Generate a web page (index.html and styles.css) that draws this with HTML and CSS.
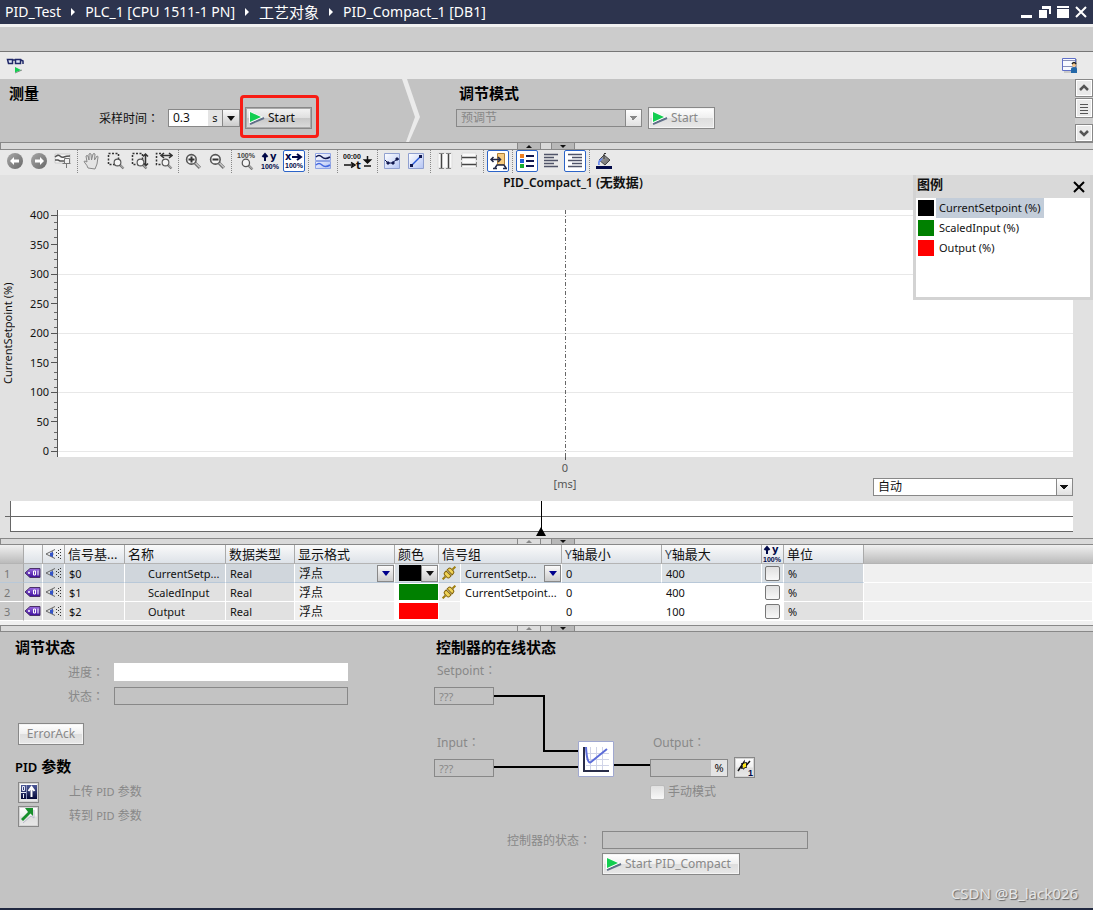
FILE: index.html
```html
<!DOCTYPE html>
<html lang="zh-CN">
<head>
<meta charset="utf-8">
<title>PID_Compact_1 [DB1]</title>
<link rel="stylesheet" href="styles.css">
</head>
<body>
<svg class="defs" aria-hidden="true">
  <defs>
    <linearGradient id="gGrey" x1="0" y1="0" x2="1" y2="1"><stop offset="0" stop-color="#a8a8a8"/><stop offset="1" stop-color="#686868"/></linearGradient>
    <linearGradient id="gBlue" x1="0" y1="0" x2="1" y2="1"><stop offset="0" stop-color="#ffffff"/><stop offset="1" stop-color="#b4c4f4"/></linearGradient>
    <linearGradient id="gTag" x1="0" y1="0" x2="0" y2="1"><stop offset="0" stop-color="#9a6ae0"/><stop offset="1" stop-color="#3c0c9c"/></linearGradient>
    <linearGradient id="gNavy" x1="0" y1="0" x2="0" y2="1"><stop offset="0" stop-color="#4c5898"/><stop offset="1" stop-color="#040838"/></linearGradient>
    <symbol id="play" viewBox="0 0 16 14"><path d="M1 13L15 7" stroke="#5f6f88" stroke-width="2"/><path d="M0 0L14 6L0 12.500Z" fill="#fff"/><path d="M1 1L12 6L1 11Z" fill="#12ce50"/></symbol>
    <symbol id="mag" viewBox="0 0 16 16"><path d="M9.500 9.500l4.500 4.500" stroke="#777" stroke-width="3"/><path d="M9.500 9l4.500 4.500" stroke="#d8d8d8" stroke-width="1"/><circle cx="6" cy="6" r="4.500" fill="#f4f4f4" stroke="#555" stroke-width="1.500"/></symbol>
    <symbol id="tag" viewBox="0 0 16 12"><path d="M0 6L5 1.500H15V10.500H5Z" fill="url(#gTag)" stroke="#4a3068"/><circle cx="4" cy="6" r="1" fill="#fff"/><path d="M8.500 4h2v4h-2zM13 3.500v5" fill="none" stroke="#fff"/></symbol>
    <symbol id="eye" viewBox="0 0 16 12"><path d="M10 1.500L1 6L10 10.500M7 3q2 3 0 6" fill="none" stroke="#666"/><path d="M5 5l3-1v5l-3-1z" fill="#3454c8"/><path d="M11 4h1v1h-1zM11 7h1v1h-1zM13 2h1v1h-1zM13 5h1v1h-1zM13 9h1v1h-1zM15 1h1v1h-1zM15 4h1v1h-1zM15 7h1v1h-1zM15 10h1v1h-1z" fill="#333"/></symbol>
    <symbol id="link" viewBox="0 0 14 14"><g transform="rotate(-45 7 7)"><path d="M-2 7h4M12 7h4" stroke="#a08010" stroke-width="2"/><path d="M2.500 5.500q0-2 2-2h2v7h-2q-2 0-2-2zM8 3.500h1.500q2 0 2 2v3q0 2-2 2H8z" fill="#f0d458" stroke="#806008"/></g></symbol>
  </defs>
</svg>

<header class="titlebar">
  <nav class="crumbs">
    <span>PID_Test</span><i class="arrow"></i><span>PLC_1 [CPU 1511-1 PN]</span><i class="arrow"></i><span class="cjk">工艺对象</span><i class="arrow"></i><span>PID_Compact_1 [DB1]</span>
  </nav>
  <div class="winbtns">
    <button aria-label="最小化"><svg width="12" height="12"><path d="M0 9h11v3H0z" fill="#fff"/></svg></button>
    <button aria-label="还原"><svg width="12" height="12"><path d="M3 0h9v8h-2V3H3z" fill="#fff"/><path d="M0 4h8v8H0z" fill="#fff"/></svg></button>
    <button aria-label="最大化"><svg width="12" height="12"><path d="M0 0h12v2H0zM0 3h12v9H0z" fill="#fff"/></svg></button>
    <button aria-label="关闭"><svg width="12" height="12"><path d="M1 1l10 10M11 1L1 11" stroke="#fff" stroke-width="2"/></svg></button>
  </div>
</header>
<div class="tabstrip"></div>
<div class="topbar">
  <button class="plain" aria-label="监视"><svg width="18" height="17"><path d="M1.500 2.500h5v4h-4zM9.500 2.500h5v4h-5zM6 3h4M15 3l2 1v3" fill="#dce4f4" stroke="#202868" stroke-width="1.500"/><path d="M9 16l7-3" stroke="#888"/><path d="M9 10l6 3l-6 2.500z" fill="#12ce50"/></svg></button>
  <button class="plain" aria-label="视图"><svg width="17" height="17"><path d="M1.500 1.500h13v12h-13z" fill="#f8faff" stroke="#6070c8"/><path d="M2 3.500h12M2 9.500h10" stroke="#8890b8"/><path d="M15.500 2v13H3" fill="none" stroke="#aaa"/><path d="M10 16v-4q0-2 3-2t3 2v4z" fill="#2468a8"/><circle cx="13" cy="8" r="2" fill="#f4c488"/><path d="M11 7q2-3 4 0" fill="none" stroke="#222" stroke-width="1.500"/></svg></button>
</div>

<section class="measure">
  <div class="measure-left">
    <h2>测量</h2>
    <div class="row sample">
      <label for="rate">采样时间<span class="colon" lang="zh-TW">：</span></label>
      <div class="combo rate"><input id="rate" value="0.3"><span class="unit">s</span><button class="drop" aria-label="展开"><i class="tri"></i></button></div>
      <div class="marked"><button class="btn start"><svg width="16" height="14"><use href="#play"/></svg>Start</button></div>
    </div>
  </div>
  <svg class="chevron" width="20" height="63"><path d="M0 0h5l13 38l-11 25H4l9-25z" fill="#ebebeb"/></svg>
  <div class="measure-right">
    <h2>调节模式</h2>
    <div class="row">
      <select class="mode" aria-label="调节模式" disabled><option>预调节</option></select>
      <button class="btn start" disabled><svg width="16" height="14"><use href="#play"/></svg>Start</button>
    </div>
  </div>
  <div class="scroll">
    <button aria-label="向上"><svg width="16" height="16"><path d="M4 10l4-4l4 4" fill="none" stroke="#555" stroke-width="2.500"/></svg></button>
    <button class="thumb" aria-label="滚动条"><svg width="16" height="16"><path d="M4 4.500h8M4 7.500h8M4 10.500h8M4 13.500h8" stroke="#555"/></svg></button>
    <button class="down" aria-label="向下"><svg width="16" height="16"><path d="M4 6l4 4l4-4" fill="none" stroke="#555" stroke-width="2.500"/></svg></button>
  </div>
</section>
<div class="splitter"><span><i class="tri up"></i></span><span><i class="tri"></i></span></div>

<div class="tools">
  <button aria-label="后退"><svg width="18" height="18"><circle cx="9" cy="9" r="8" fill="url(#gGrey)"/><path d="M4 9l4-4v2.500h5v3H8V13z" fill="#fff"/></svg></button>
  <button aria-label="前进"><svg width="18" height="18"><circle cx="9" cy="9" r="8" fill="url(#gGrey)"/><path d="M14 9l-4-4v2.500H5v3h5V13z" fill="#fff"/></svg></button>
  <button aria-label="曲线"><svg width="18" height="18"><path d="M1 2h15v9H1z" fill="#f6f6f6" stroke="#ccc"/><path d="M1 5q3-3 5-1t4 1t6-1M1 8h3l2 1h4" fill="none" stroke="#555" stroke-width="1.500"/><path d="M10.500 6.500h5v5h-5zM8.500 11.500h8M12.500 12v4" fill="#eee" stroke="#777"/></svg></button>
  <i class="sep"></i>
  <button aria-label="平移"><svg width="18" height="18"><path d="M5 16q-1-3-3-5t0-2l2 1L3 4q1-1 2 0l1 4V2q1-1 2 0l.5 6L10 2q1-1 2 0l-.5 6L14 4q1 0 1 1l-1 7l-2 5z" fill="#e4e4e4" stroke="#888"/></svg></button>
  <button aria-label="区域缩放"><svg width="18" height="18"><path d="M1.500 1.500h10v11h-10z" fill="none" stroke="#333" stroke-width="1.500" stroke-dasharray="2 1.500"/><use href="#mag" x="6" y="6" width="12" height="12"/></svg></button>
  <button aria-label="垂直缩放"><svg width="18" height="18"><path d="M1.500 1.500h10v11h-10z" fill="none" stroke="#333" stroke-width="1.500" stroke-dasharray="2 1.500"/><use href="#mag" x="5" y="6" width="12" height="12"/><path d="M14.500 2v11M12 4.500L14.500 2L17 4.500M13 11.500l2 2l2-2" fill="none" stroke="#333" stroke-width="1.500"/></svg></button>
  <button aria-label="水平缩放"><svg width="18" height="18"><path d="M6 1.500H1.500v11H7" fill="none" stroke="#333" stroke-width="1.500" stroke-dasharray="2 1.500"/><use href="#mag" x="6" y="6" width="12" height="12"/><path d="M6 3.500h11M9 1L6 3.500L9 6M14 1l3 2.500L14 6" fill="none" stroke="#333" stroke-width="1.500"/></svg></button>
  <i class="sep"></i>
  <button aria-label="放大"><svg width="18" height="18"><use href="#mag" x="1" y="1" width="17" height="17"/><path d="M4.500 7.500h6M7.500 4.500v6" stroke="#333" stroke-width="2"/></svg></button>
  <button aria-label="缩小"><svg width="18" height="18"><use href="#mag" x="1" y="1" width="17" height="17"/><path d="M4.500 7.500h6" stroke="#333" stroke-width="2"/></svg></button>
  <i class="sep"></i>
  <button aria-label="100%"><svg width="20" height="18"><text x="1" y="6" class="pct grey">100%</text><use href="#mag" x="5" y="6" width="13" height="13"/></svg></button>
  <button aria-label="Y 100%"><svg width="20" height="18"><path d="M5 9V3M2.500 5L5 2L7.500 5" fill="none" stroke="#000848" stroke-width="2"/><text x="10" y="8" class="axis">y</text><text x="1" y="17" class="pct">100%</text></svg></button>
  <button class="on" aria-label="X 100%"><svg width="20" height="20"><text x="1" y="9" class="axis">x</text><path d="M8 6h8M13 3l4 3l-4 3" fill="none" stroke="#000848" stroke-width="2"/><text x="1" y="17" class="pct">100%</text></svg></button>
  <i class="sep"></i>
  <button aria-label="泳道"><svg width="18" height="18"><path d="M1.500 1.500h15v7h-15zM1.500 9.500h15v7h-15z" fill="url(#gBlue)" stroke="#90a4e4"/><path d="M2 5q3-3 6 0t8 0" fill="none" stroke="#101850" stroke-width="1.500"/><path d="M2 13q3-3 6 0t8 0" fill="none" stroke="#4468e0" stroke-width="1.500"/></svg></button>
  <i class="sep"></i>
  <button class="wide" aria-label="时间单位"><svg width="30" height="18"><text x="0" y="7" class="pct black">00:00</text><path d="M1 13h9M8 10.500l4 2.500l-4 2.500" fill="none" stroke="#111" stroke-width="1.500"/><text x="13" y="17" class="axis black">t</text><path d="M24.500 4v5M21.500 8h6l-3 3zM21 14h7" fill="#111" stroke="#111" stroke-width="1.500"/></svg></button>
  <i class="sep"></i>
  <button aria-label="插值"><svg width="18" height="18"><path d="M1.500 1.500h15v15h-15z" fill="url(#gBlue)" stroke="#90a0d0"/><path d="M2 8l3 3h4l4-3l3-1" fill="none" stroke="#101850"/><path d="M4 10h2v2H4zM9 10h2v2H9zM13 6h2v2h-2z" fill="#101850" stroke="#101850"/></svg></button>
  <button aria-label="直线"><svg width="18" height="18"><path d="M1.500 1.500h15v15h-15z" fill="url(#gBlue)" stroke="#90a0d0"/><path d="M4 14L14 4" stroke="#2858d8" stroke-width="1.500"/><path d="M3 12h3v3H3zM12 3h3v3h-3z" fill="#101850"/></svg></button>
  <i class="sep"></i>
  <button aria-label="垂直标尺"><svg width="18" height="18"><path d="M2 1h14v15H2z" fill="#fafafa" stroke="#ddd"/><path d="M5.500 2v14M12.500 2v14" stroke="#444" stroke-width="1.500"/><path d="M3 1.500h5M3 16.500h5M10 1.500h5M10 16.500h5" stroke="#888"/></svg></button>
  <button aria-label="水平标尺"><svg width="18" height="18"><path d="M2 1h14v15H2z" fill="#fafafa" stroke="#ddd"/><path d="M2 5.500h14M2 12.500h14" stroke="#444" stroke-width="1.500"/><path d="M1.500 3v5M16.500 3v5M1.500 10v5M16.500 10v5" stroke="#888"/></svg></button>
  <i class="sep"></i>
  <button class="on" aria-label="图表设置"><svg width="18" height="18"><path d="M8.500 1.500h7v11h-7z" fill="#f8cc80" stroke="#b08038"/><path d="M6 16l2-3h7l2 3M4 16.500h4M14 16.500h4" stroke="#202848" stroke-width="1.500" fill="none"/><path d="M2 7.500h9M4.500 5L2 7.500l2.500 2.500M9 5l2.500 2.500L9 10" fill="none" stroke="#202848" stroke-width="1.500"/></svg></button>
  <i class="sep"></i>
  <button class="on" aria-label="图例"><svg width="18" height="18"><path d="M2 2h4v4H2z" fill="#f08020"/><path d="M2 7h4v4H2z" fill="#2060d8"/><path d="M2 12h4v4H2z" fill="#18b030"/><path d="M8 4h8M8 9h8M8 14h8" stroke="#101850" stroke-width="2"/></svg></button>
  <button aria-label="左对齐"><svg width="18" height="18"><path d="M2 2.500h14M2 5.500h10M2 8.500h14M2 11.500h10M2 14.500h14" stroke="#505468" stroke-width="1.500"/></svg></button>
  <button class="on" aria-label="右对齐"><svg width="18" height="18"><path d="M2 2.500h14M6 5.500h10M2 8.500h14M6 11.500h10M2 14.500h14" stroke="#505468" stroke-width="1.500"/></svg></button>
  <i class="sep"></i>
  <button aria-label="背景颜色"><svg width="18" height="18"><path d="M1 14h16v3H1z" fill="#000848"/><path d="M9 3l6 5l-5 5l-6-5z" fill="url(#gGrey)" stroke="#444"/><path d="M9 7V2q1-2 2 0" fill="none" stroke="#333"/><path d="M3 13q-1-6 5-7l-2 3q-2 1-1 4z" fill="#6c8cf0"/></svg></button>
</div>

<section class="chart">
  <h3>PID_Compact_1 (<span class="cjk">无数据</span>)</h3>
  <div class="plotrow">
    <div class="ytitle">CurrentSetpoint (%)</div>
    <div class="ylabels"><span>400</span><span>350</span><span>300</span><span>250</span><span>200</span><span>150</span><span>100</span><span>50</span><span>0</span></div>
    <div class="ticks"></div>
    <svg class="plot" width="100%" height="247">
      <line x1="0" x2="100%" y1="5.5" y2="5.5"/><line x1="0" x2="100%" y1="64.5" y2="64.5"/><line x1="0" x2="100%" y1="123.5" y2="123.5"/><line x1="0" x2="100%" y1="182.5" y2="182.5"/><line x1="0" x2="100%" y1="241.5" y2="241.5"/>
      <line class="cursor" x1="50%" x2="50%" y1="0" y2="247"/>
    </svg>
  </div>
  <div class="xaxis"><i></i><span>0</span><span>[ms]</span></div>
  <div class="autorow"><div class="combo auto"><select aria-label="模式"><option>自动</option></select></div></div>
  <div class="timeline"><div class="track"></div><svg class="handle" width="10" height="35"><path d="M5.500 0v35" stroke="#000"/><path d="M5 26l5 9H0z"/></svg></div>
  <aside class="legend">
    <header><h3 class="cjk">图例</h3><button aria-label="关闭"><svg width="12" height="12"><path d="M1 1l10 10M11 1L1 11" stroke="#000" stroke-width="2"/></svg></button></header>
    <ul>
      <li><i class="black"></i><span class="sel">CurrentSetpoint (%)</span></li>
      <li><i class="green"></i><span>ScaledInput (%)</span></li>
      <li><i class="red"></i><span>Output (%)</span></li>
    </ul>
  </aside>
</section>
<div class="splitter"><span class="dim"><i class="tri up"></i></span><span><i class="tri"></i></span></div>

<table class="signals">
  <colgroup><col class="c24"><col class="c19"><col class="c22"><col class="c60"><col class="c101"><col class="c69"><col class="c100"><col class="c44"><col class="c22"><col class="c101"><col class="c100"><col class="c100"><col class="c22"><col class="c80"><col></colgroup>
  <thead><tr><th></th><th></th><th><svg width="16" height="12"><use href="#eye"/></svg></th><th>信号基...</th><th>名称</th><th>数据类型</th><th>显示格式</th><th>颜色</th><th colspan="2">信号组</th><th><span class="navy">Y</span>轴最小</th><th><span class="navy">Y</span>轴最大</th><th class="ic"><svg width="20" height="18"><path d="M5 9V3M2.500 5L5 2L7.500 5" fill="none" stroke="#000848" stroke-width="2"/><text x="10" y="8" class="axis">y</text><text x="1" y="17" class="pct">100%</text></svg></th><th>单位</th><th></th></tr></thead>
  <tbody>
    <tr class="sel"><td class="num">1</td><td class="ro"><svg width="16" height="12"><use href="#tag"/></svg></td><td class="ro"><svg width="16" height="12"><use href="#eye"/></svg></td><td class="ro">$0</td><td class="ro name">CurrentSetp...</td><td class="ro">Real</td><td class="semi"><div class="cell cjk12">浮点<button class="drop blue" aria-label="格式"><i class="tri"></i></button></div></td><td class="color"><div class="cell"><i class="sw black"></i><button class="drop" aria-label="颜色"><i class="tri"></i></button></div></td><td class="semi ic"><svg width="14" height="14"><use href="#link"/></svg></td><td><div class="cell">CurrentSetp...<button class="drop blue" aria-label="信号组"><i class="tri"></i></button></div></td><td>0</td><td>400</td><td class="ic"><input type="checkbox" aria-label="Y 100%"></td><td class="ro">%</td><td class="none"></td></tr>
    <tr><td class="num">2</td><td class="ro"><svg width="16" height="12"><use href="#tag"/></svg></td><td class="ro"><svg width="16" height="12"><use href="#eye"/></svg></td><td class="ro">$1</td><td class="ro name">ScaledInput</td><td class="ro">Real</td><td class="semi cjk12">浮点</td><td class="color"><div class="cell"><i class="sw green"></i></div></td><td class="semi ic"><svg width="14" height="14"><use href="#link"/></svg></td><td>CurrentSetpoint...</td><td>0</td><td>400</td><td class="ic"><input type="checkbox" aria-label="Y 100%"></td><td class="ro">%</td><td class="none"></td></tr>
    <tr><td class="num">3</td><td class="ro"><svg width="16" height="12"><use href="#tag"/></svg></td><td class="ro"><svg width="16" height="12"><use href="#eye"/></svg></td><td class="ro">$2</td><td class="ro name">Output</td><td class="ro">Real</td><td class="semi cjk12">浮点</td><td class="color"><div class="cell"><i class="sw red"></i></div></td><td class="semi ic"></td><td></td><td>0</td><td>100</td><td class="ic"><input type="checkbox" aria-label="Y 100%"></td><td class="ro">%</td><td class="none"></td></tr>
  </tbody>
</table>
<div class="tablefoot"></div>
<div class="splitter"><span class="dim"><i class="tri up"></i></span><span><i class="tri"></i></span></div>

<main class="status">
  <section class="tuning">
    <h2>调节状态</h2>
    <div class="field"><label for="prog">进度<span class="colon" lang="zh-TW">：</span></label><input id="prog" class="white" disabled></div>
    <div class="field"><label for="stat">状态<span class="colon" lang="zh-TW">：</span></label><input id="stat" disabled></div>
    <button class="btn ack" disabled>ErrorAck</button>
    <h2><span class="latin">PID</span> 参数</h2>
    <div class="param"><button class="btn icon" aria-label="上传 PID 参数"><svg width="18" height="18"><path d="M1 2h16v14H1z" fill="url(#gNavy)"/><path d="M2.500 3.500h2v4h-2zM1 9.500h5M3.500 11v4" fill="none" stroke="#e8ecf8"/><path d="M6.500 2v14" stroke="#8890b8"/><path d="M11.500 14V5M8.500 8l3-4l3 4" fill="none" stroke="#fff" stroke-width="2"/></svg></button><span>上传 <span class="latin">PID</span> 参数</span></div>
    <div class="param"><button class="btn icon" aria-label="转到 PID 参数"><svg width="18" height="18"><path d="M14 3v8l-3-2l-8 7" stroke="#bbc" fill="none"/><path d="M5 1h8v8l-2.500-2.500L3 14l-2-2l7-7z" fill="#18902c"/></svg></button><span>转到 <span class="latin">PID</span> 参数</span></div>
  </section>
  <section class="online">
    <h2>控制器的在线状态</h2>
    <div class="diagram">
      <svg class="wires" width="260" height="110"><path d="M60 33h50v55h36M60 104h86M178 102h38" fill="none" stroke="#000" stroke-width="2"/></svg>
      <label class="n-sp-l" for="sp">Setpoint<span class="colon" lang="zh-TW">：</span></label><input class="n-sp" id="sp" value="???" disabled>
      <label class="n-in-l" for="inp">Input<span class="colon" lang="zh-TW">：</span></label><input class="n-in" id="inp" value="???" disabled>
      <svg class="n-pid" width="36" height="36"><path d="M.5.500h35v35H.5z" fill="#fff" stroke="#a0a8d0"/><path d="M12.500 6v23M18.500 6v23M24.500 6v23M8 12.500h23M8 18.500h23M8 24.500h23" stroke="#d0d4e8"/><path d="M6 6v24h25" fill="none" stroke="#282c48" stroke-width="2"/><path d="M8 6q1 18 5 15L29 8" fill="none" stroke="#5c6cd8" stroke-width="2"/></svg>
      <label class="n-out-l" for="out">Output<span class="colon" lang="zh-TW">：</span></label>
      <div class="n-out"><input id="out" disabled><span class="unit">%</span></div>
      <button class="btn icon n-bolt" aria-label="手动"><svg width="18" height="18"><path d="M2 12L8 3V9L14 2M6 10V4M10 9V3" fill="none" stroke="#111" stroke-width="1.500"/><path d="M7 5l3-1v4l-3 1z" fill="#ffe818"/><text x="12" y="17" class="pct one">1</text></svg></button>
      <label class="n-man"><input type="checkbox" disabled>手动模式</label>
    </div>
    <div class="field ctl"><label for="cs">控制器的状态<span class="colon" lang="zh-TW">：</span></label><input id="cs" disabled></div>
    <button class="btn start go" disabled><svg width="16" height="14"><use href="#play"/></svg>Start PID_Compact</button>
  </section>
  <div class="mark">CSDN @B_lack026</div>
</main>
</body>
</html>
```
FILE: styles.css
```css
* { box-sizing: border-box; }
body {
  margin: 0;
  min-height: 100vh;
  display: flex;
  flex-direction: column;
  background: #c3c3c3;
  color: #111;
  font: 11px/16px "Noto Sans", "Noto Sans CJK SC", sans-serif;
}
h2, h3, ul { margin: 0; padding: 0; }
h2 { font-size: 15px; line-height: 20px; font-weight: 700; color: #000; }
h2 .latin { font-size: 13px; font-weight: 600; }
i { font-style: normal; }
svg { display: block; flex: none; }
.defs { position: absolute; width: 0; height: 0; }
button, input, select { font: inherit; color: inherit; margin: 0; padding: 0; border-radius: 0; }
button { border: 0; background: none; display: flex; align-items: center; justify-content: center; }
label { font-size: 12px; line-height: 18px; white-space: nowrap; }
.colon { font-family: "Noto Sans CJK TC", sans-serif; }
.tri { border: 4px solid transparent; border-top: 5px solid currentColor; border-bottom: 0; }
.tri.up { border-bottom: 4px solid currentColor; border-top: 0; }
.black { background: #000; }
.green { background: #008000; }
.red { background: #f00; }
.pct { font: 700 7px "Liberation Sans", sans-serif; fill: #000848; }
.pct.grey { fill: #444; }
.pct.one { font-size: 9px; }
.black.pct, .black.axis { fill: #111; }
.axis { font: 700 10px "DejaVu Sans", sans-serif; fill: #000848; }

.titlebar { display: flex; justify-content: space-between; align-items: center; height: 24px; padding: 0 6px 0 5px; background: #2d344e; color: #fff; }
.crumbs { display: flex; align-items: center; font-size: 14px; }
.crumbs .cjk { font-size: 15px; }
.arrow { margin: 0 10px; border: 4px solid transparent; border-left-color: #fff; border-right: 0; }
.winbtns { display: flex; gap: 6px; }
.tabstrip { height: 25px; margin-top: 3px; background: #ccc; border-bottom: 1px solid #777; box-shadow: 0 -3px #f0f0f0; }
.topbar { display: flex; justify-content: space-between; height: 27px; padding: 5px 15px 0 6px; background: #eaeaea; }
.topbar button { height: 17px; }

.measure { display: flex; height: 64px; border-bottom: 1px solid #888; background: #c3c3c3; }
.measure-left { width: 402px; padding: 4px 0 0 9px; }
.measure-right { flex: 1; padding: 4px 0 0 34px; }
.measure-right h2 { padding-left: 3px; }
.row { display: flex; align-items: center; height: 22px; margin-top: 4px; }
.sample { padding-left: 90px; }
.sample label { width: 69px; }
.combo { display: flex; border: 1px solid #888; background: #fff; height: 18px; }
.rate { width: 72px; margin-right: 5px; }
.rate input { flex: 1; min-width: 0; border: 0; padding-left: 4px; font-size: 12px; }
.unit { width: 14px; text-align: center; background: #e4e4e4; }
.drop { width: 17px; border: 1px solid #888; border-width: 0 0 0 1px; background: linear-gradient(#fafafa, #ccc); }
.drop.blue { color: #00008c; }
.btn { height: 22px; border: 1px solid #888; background: linear-gradient(#fff, #f0f0f0 48%, #dedede 52%, #e8e8e8); box-shadow: inset 0 0 0 1px #d4d4d4; }
.btn:disabled { color: #888; box-shadow: inset 0 0 0 1px #f4f4f4; }
.start { width: 67px; justify-content: flex-start; padding-left: 3px; gap: 3px; font-size: 12px; }
.marked { position: relative; }
.marked .btn { background: linear-gradient(#f4f4f4, #e0e0e0 48%, #c8c8c8 52%, #dcdcdc); box-shadow: inset 0 0 0 1px #aaa; }
.marked::after { content: ""; position: absolute; inset: -12px -7px -9px -5px; border: 3px solid #f81c14; border-radius: 4px; }
.mode { width: 186px; height: 18px; margin-right: 6px; padding-left: 4px; border: 1px solid #888; background: #c3c3c3; color: #888; font-size: 12px; opacity: 1; }
select { appearance: none; }
.mode, .auto select {
  background-image: conic-gradient(from 315deg at 50% 100%, currentColor 90deg, transparent 0), linear-gradient(#888, #888), linear-gradient(#fff, #ddd);
  background-size: 8px 4px, 1px 18px, 15px 18px;
  background-position: right 4px center, right 15px top, right top;
  background-repeat: no-repeat;
}
.scroll { display: flex; flex-direction: column; gap: 1px; width: 18px; background: #cfcfcf; }
.scroll button { height: 18px; border: 1px solid #888; background: #eaeaea; box-shadow: inset 0 0 0 1px #fff; }
.scroll .thumb { height: 20px; }
.scroll .down { margin-top: auto; }

.splitter { display: flex; justify-content: center; gap: 10px; height: 7px; padding-right: 2px; background: #d9d9d9; border: 1px solid #888; border-width: 1px 0 1px 1px; }
.measure + .splitter { border-top: 0; }
.splitter span { width: 24px; background: #b8b8b8; border: 1px solid #888; border-width: 0 1px; display: flex; justify-content: center; align-items: center; overflow: hidden; }
.splitter .tri { border-width: 3px 3px 0; }
.splitter .tri.up { border-width: 0 3px 3px; }
.splitter .dim { color: #888; background: #ddd; }

.tools { display: flex; align-items: center; height: 25px; padding: 0 3px 3px; background: #e9e9e9; }
.tools button { width: 24px; height: 22px; flex: none; }
.tools .wide { width: 35px; }
.tools .on { width: 22px; margin: 0 1px; background: #fff; border: 1px solid #2c64c8; border-radius: 2px; }
.sep { width: 1px; height: 23px; margin: 0 2px; border-left: 1px dotted #888; }

.chart { position: relative; background: #e1e1e1; }
.chart > h3 { padding: 0 0 0 53px; text-align: center; font-size: 12px; line-height: 15px; font-weight: 600; }
h3 .cjk, h3.cjk { font-size: 13px; }
.plotrow { display: flex; margin-top: 20px; padding-right: 20px; }
.ytitle { writing-mode: vertical-rl; transform: rotate(180deg); width: 16px; text-align: center; }
.ylabels { display: flex; flex-direction: column; justify-content: space-between; width: 33px; margin: -3px 1px -2px 0; text-align: right; line-height: 16px; height: 252px; }
.ticks { width: 8px; height: 247px; border-right: 1px solid #555;
  background: repeating-linear-gradient(#555 0 1px, transparent 1px 59px) right 5px / 6px 237px no-repeat,
  repeating-linear-gradient(transparent 0 29px, #555 29px 30px, transparent 30px 59px) right 5px / 6px 237px no-repeat,
  repeating-linear-gradient(transparent 0 7px, #666 7px 8px, transparent 8px 14px, #666 14px 15px, transparent 15px 22px, #666 22px 23px, transparent 23px 29px, transparent 29px 30px) right 5px / 3px 237px no-repeat; }
.plot { flex: 1; min-width: 0; background: #fff; stroke: #e8e8e8; }
.plot .cursor { stroke: #666; stroke-dasharray: 4 2 1 2; }
.xaxis { display: flex; flex-direction: column; align-items: center; margin-left: 37px; color: #555; height: 35px; }
.xaxis i { width: 1px; height: 3px; flex: none; background: #555; }
.xaxis span { height: 17px; }
.autorow { display: flex; justify-content: flex-end; padding-right: 20px; margin-top: -14px; }
.auto { width: 200px; }
.auto select { flex: 1; border: 0; padding-left: 4px; font-size: 12px; background-color: #fff; }
.timeline { position: relative; margin: 5px 20px 0 10px; height: 37px; }
.timeline::after { content: ""; position: absolute; left: -5px; right: 0; top: 15px; border-top: 1px solid #666; }
.track { height: 31px; background: #fff; border: 1px solid #666; border-width: 0 0 1px 1px; }
.handle { position: absolute; left: 49.5%; top: 0; z-index: 1; }
.legend { position: absolute; right: 0; top: 0; width: 180px; height: 125px; border: 3px solid #d3d3d3; border-top: 0; background: #fff; }
.legend header { display: flex; justify-content: space-between; height: 23px; padding: 1px 5px 0 1px; background: #d9d9d9; }
.legend li { display: flex; height: 20px; padding-left: 2px; align-items: center; list-style: none; }
.legend li i { width: 16px; height: 16px; margin-right: 2px; }
.legend li span { padding: 0 4px 0 3px; line-height: 20px; }
.legend .sel { background: #c3cdd9; }

.signals { width: 100%; table-layout: fixed; border-collapse: separate; border-spacing: 0; }
.c19 { width: 19px; } .c22 { width: 22px; } .c24 { width: 24px; } .c44 { width: 44px; } .c60 { width: 60px; }
.c69 { width: 69px; } .c80 { width: 80px; } .c100 { width: 100px; } .c101 { width: 101px; }
.signals th { height: 19px; padding: 0 0 0 3px; border-right: 1px solid #aaa; border-bottom: 1px solid #b4b4b4; background: linear-gradient(#fafafa, #dde2e8); font-weight: 400; font-size: 13px; line-height: 16px; text-align: left; white-space: nowrap; overflow: hidden; }
.signals th:nth-child(1), .signals th:last-child { background: linear-gradient(#f0f0f0, #bbb); }
.signals th:last-child { border-right: 0; }
.signals th:nth-child(3) { padding-left: 2px; }
.signals th.ic { padding-left: 0; }
.navy { font-size: 12px; color: #345; }
.signals td { height: 19px; padding: 0 0 0 4px; border-right: 1px solid #fff; border-bottom: 1px solid #fff; background: #fff; white-space: nowrap; overflow: hidden; line-height: 17px; }
.signals .ro { background: #e1e1e1; }
.signals .semi { background: #f0f0f0; }
.signals .num { background: #cbcbcb; color: #777; border-right-color: #aaa; }
.signals .name { padding-left: 23px; }
.signals td:nth-child(2) { padding-left: 1px; }
.signals td:nth-child(3) { padding-left: 2px; }
.signals .ic { padding-left: 3px; }
.signals .none { background: #f0f0f0; }
.signals .sel td { background: #dae0e5; border-bottom-color: #b8c8d8; }
.signals .sel .ro { background: #d0d6dc; }
.signals .sel .num { background: #cbcbcb; }
.signals .sel .none { background: #f0f0f0; border-bottom-color: #fff; }
.signals .color { padding: 0; }
.cell { display: flex; justify-content: space-between; align-items: center; height: 17px; }
.color .cell { padding-left: 4px; }
.sw { flex: 1; height: 16px; }
.cell .drop { height: 17px; border-width: 1px; }
.cjk12 { font-size: 12px; }
input[type=checkbox] { appearance: none; display: block; width: 15px; height: 15px; border: 1px solid #777; border-radius: 2px; background: linear-gradient(#e0e0e0, #f8f8f8); }
.tablefoot { height: 4px; background: #f0f0f0; }

.status { position: relative; flex: 1; display: flex; color: #888; border-bottom: 2px solid #202840; }
.tuning { width: 434px; padding: 5px 0 0 15px; }
.tuning h2 { margin-bottom: 3px; }
.status input:not([type=checkbox]) { border: 1px solid #888; background: transparent; height: 18px; padding: 0 4px; color: #888; }
.field { display: flex; align-items: center; height: 24px; }
.tuning .field { padding-left: 53px; }
.tuning label { width: 46px; }
.tuning input { width: 234px; }
.status .white:not([type=checkbox]) { background: #fff; border-color: #fff; }
.ack { width: 66px; margin: 15px 0 11px 3px; font-size: 12px; }
.param { display: flex; align-items: center; height: 24px; gap: 30px; padding-left: 3px; font-size: 12px; }
.param .latin { font-size: 11px; }
.icon { width: 21px; height: 21px; }
.online { flex: 1; padding: 5px 0 0; }
.online h2 { padding-left: 2px; }
.diagram { position: relative; height: 171px; }
.diagram > * { position: absolute; }
.wires { left: 0; top: 6px; }
.n-sp-l { left: 3px; top: 4px; } .n-sp { left: 0; top: 30px; width: 60px; }
.n-in-l { left: 3px; top: 76px; } .n-in { left: 0; top: 102px; width: 60px; }
.n-pid { left: 144px; top: 84px; }
.n-out-l { left: 219px; top: 76px; }
.n-out { left: 216px; top: 102px; width: 78px; height: 18px; display: flex; }
.n-out input { flex: 1; min-width: 0; }
.n-out .unit { width: 17px; border: 1px solid #888; border-left: 0; color: #111; }
.status .n-out input:not([type=checkbox]) { border-right: 0; }
.n-bolt { left: 300px; top: 100px; }
.n-man { left: 216px; top: 126px; display: flex; align-items: center; gap: 3px; }
.n-man input { border-color: #bbb; }
.ctl { padding-left: 73px; }
.ctl label { width: 95px; }
.ctl input { width: 206px; }
.go { width: 138px; margin: 1px 0 0 168px; }
.mark { position: absolute; right: 15px; bottom: 5px; font-size: 15px; line-height: 20px; color: #e6e6e6; text-shadow: 1px 1px 1px #666; }
```
